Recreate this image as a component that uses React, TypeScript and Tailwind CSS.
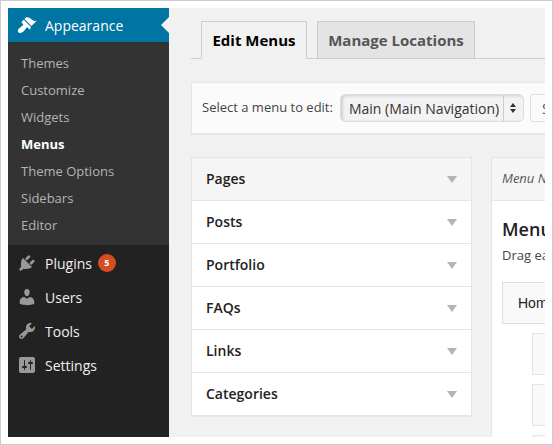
const font = { fontFamily: '"Open Sans", sans-serif' };

const icons = {
  appearance:
    "M14.48 11.06L7.41 3.99l1.5-1.5c.5-.56 2.3-.47 3.51.32 1.21.8 1.43 1.28 2.91 2.1 1.18.64 2.45 1.26 4.45.85zm-.71.71L6.7 4.7 4.93 6.47c-.39.39-.39 1.02 0 1.41l1.06 1.06c.39.39.39 1.03 0 1.42-.6.6-1.43 1.11-2.21 1.69-.35.26-.7.53-1.01.84C1.43 13.23.4 14.94 1.2 17.1c.1.26.3.47.54.55 2.16.8 3.87-.23 5.21-1.57.31-.31.58-.66.84-1.01.58-.78 1.09-1.61 1.69-2.21.39-.39 1.03-.39 1.42 0l1.06 1.06c.39.39 1.02.39 1.41 0z",
  plugins:
    "M13.11 4.36L9.87 7.6 8 5.73l3.24-3.24c.35-.34 1.05-.2 1.56.32.52.51.66 1.21.31 1.55zm-8 1.77l.91-1.12 9.01 9.01-1.19.84c-.71.71-2.63 1.16-3.82 1.16H6.14L4.9 17.26c-.59.59-1.54.59-2.12 0-.59-.58-.59-1.53 0-2.12l1.24-1.24v-3.88c0-1.13.4-3.19 1.09-3.89zm7.26 3.97l3.24-3.24c.34-.35 1.04-.21 1.55.31.52.51.66 1.21.31 1.55l-3.24 3.25z",
  users:
    "M10 9.25c-2.27 0-2.73-3.44-2.73-3.44C7 4.02 7.82 2 9.97 2c2.16 0 2.98 2.02 2.71 3.81 0 0-.41 3.44-2.68 3.44zm0 2.57L12.72 10c2.39 0 4.52 2.33 4.52 4.53v2.49s-3.65 1.13-7.24 1.13c-3.65 0-7.24-1.13-7.24-1.13v-2.49c0-2.25 1.94-4.48 4.47-4.48z",
  tools:
    "M16.68 9.77c-1.34 1.34-3.3 1.67-4.95.99l-5.41 6.52c-.99.99-2.59.99-3.58 0s-.99-2.59 0-3.57l6.52-5.42c-.68-1.65-.35-3.61.99-4.95 1.28-1.28 3.12-1.62 4.72-1.06l-2.89 2.89 2.82 2.82 2.86-2.87c.53 1.58.18 3.39-1.08 4.65zM3.81 16.21c.4.39 1.04.39 1.43 0 .4-.4.4-1.04 0-1.43-.39-.4-1.03-.4-1.43 0-.39.39-.39 1.03 0 1.43z",
  settings:
    "M18 16V4c0-1.1-.9-2-2-2H4c-1.1 0-2 .9-2 2v12c0 1.1.9 2 2 2h12c1.1 0 2-.9 2-2zM8 11h1c.55 0 1 .45 1 1s-.45 1-1 1H8v1.5c0 .28-.22.5-.5.5s-.5-.22-.5-.5V13H6c-.55 0-1-.45-1-1s.45-1 1-1h1V5.5c0-.28.22-.5.5-.5s.5.22.5.5V11zm5-2h-1c-.55 0-1-.45-1-1s.45-1 1-1h1V5.5c0-.28.22-.5.5-.5s.5.22.5.5V7h1c.55 0 1 .45 1 1s-.45 1-1 1h-1v5.5c0 .28-.22.5-.5.5s-.5-.22-.5-.5V9z",
};

function Icon({ d, className }: { d: string; className: string }) {
  return (
    <svg viewBox="0 0 20 20" className={`h-5 w-5 fill-current ${className}`} aria-hidden>
      <path d={d} />
    </svg>
  );
}

function MenuRow({ icon, label, badge }: { icon: string; label: string; badge?: string }) {
  return (
    <div className="flex h-[34px] items-center pl-[9px]">
      <Icon d={icon} className="text-[#999]" />
      <span className="ml-[8px] text-[14px] text-[#eee]">{label}</span>
      {badge && (
        <span className="ml-[6px] flex h-[18px] w-[18px] items-center justify-center rounded-full bg-[#d54e21] text-[9px] font-bold text-white">
          {badge}
        </span>
      )}
    </div>
  );
}

const subItems = ["Themes", "Customize", "Widgets", "Menus", "Theme Options", "Sidebars", "Editor"];
const panels = ["Pages", "Posts", "Portfolio", "FAQs", "Links", "Categories"];

export default function App() {
  return (
    <div className="h-[445px] w-[553px] overflow-hidden border border-[#ccc] bg-white p-[7px]" style={font}>
      <div className="flex h-[429px] w-[537px] overflow-hidden">
        {/* Sidebar */}
        <div className="flex w-[161px] shrink-0 flex-col bg-[#222]">
          <div className="relative flex h-[34px] shrink-0 items-center bg-[#0074a2] pl-[9px]">
            <Icon d={icons.appearance} className="text-white" />
            <span className="ml-[8px] text-[14px] text-white">Appearance</span>
            <span className="absolute right-0 top-[9px] h-0 w-0 border-y-[8px] border-r-[8px] border-y-transparent border-r-[#f1f1f1]" />
          </div>
          <div className="flex h-[203px] shrink-0 flex-col bg-[#333] pt-[8px]">
            {subItems.map((item) => (
              <div
                key={item}
                className={`flex h-[27px] items-center pl-[13px] text-[13px] ${
                  item === "Menus" ? "font-bold text-white" : "text-[#b4b4b4]"
                }`}
              >
                {item}
              </div>
            ))}
          </div>
          <div className="pt-[1px]">
            <MenuRow icon={icons.plugins} label="Plugins" badge="5" />
            <MenuRow icon={icons.users} label="Users" />
            <MenuRow icon={icons.tools} label="Tools" />
            <MenuRow icon={icons.settings} label="Settings" />
          </div>
        </div>

        {/* Main */}
        <div className="min-w-0 flex-1 overflow-hidden bg-[#f1f1f1] pl-[22px] pt-[13px]">
          <div className="flex h-[38px] w-[400px] items-end border-b border-[#ccc] pl-[10px]">
            <div className="-mb-px flex h-[38px] w-[106px] items-center justify-center border border-[#ccc] border-b-[#f1f1f1] bg-[#f1f1f1] text-[15px] font-bold text-black">
              Edit Menus
            </div>
            <div className="ml-[10px] flex h-[37px] w-[158px] items-center justify-center border border-b-0 border-[#ccc] bg-[#e4e4e4] text-[15px] font-bold text-[#555]">
              Manage Locations
            </div>
          </div>

          <div className="mt-[23px] flex h-[52px] w-[400px] items-center border border-[#e5e5e5] bg-[#fbfbfb] pl-[10px] shadow-[0_1px_1px_rgba(0,0,0,0.04)]">
            <span className="shrink-0 whitespace-nowrap text-[13px] text-[#444]">Select a menu to edit:</span>
            <div className="ml-[7px] flex h-[28px] w-[184px] shrink-0 items-center rounded-[5px] border border-[#ddd] bg-[#f3f3f3] shadow-[inset_2px_1px_3px_rgba(0,0,0,0.15)]">
              <span className="flex-1 whitespace-nowrap pl-[8px] text-[14px] text-[#333]">Main (Main Navigation)</span>
              <span className="flex h-full w-[20px] flex-col items-center justify-center gap-[2px] border-l border-[#ccc]">
                <span className="h-0 w-0 border-x-[3.5px] border-b-[4px] border-x-transparent border-b-[#333]" />
                <span className="h-0 w-0 border-x-[3.5px] border-t-[4px] border-x-transparent border-t-[#333]" />
              </span>
            </div>
            <div className="ml-[6px] flex h-[28px] w-[60px] shrink-0 items-center rounded-[3px] border border-[#ddd] bg-[#fbfbfb] pl-[11px] text-[14px] text-[#555]">
              Select
            </div>
          </div>

          <div className="mt-[23px] flex items-start gap-[19px]">
            <div className="w-[281px] shrink-0 border border-[#e5e5e5] bg-white shadow-[0_1px_1px_rgba(0,0,0,0.04)]">
              {panels.map((name, i) => (
                <div
                  key={name}
                  className={`flex items-center justify-between px-[14px] pb-[2px] text-[14px] font-semibold text-[#222] ${
                    i > 0 ? "h-[43px] border-t border-[#e5e5e5]" : "h-[42px] bg-[#f5f5f5]"
                  }`}
                >
                  {name}
                  <span className="mt-[2px] h-0 w-0 border-x-[5px] border-t-[7px] border-x-transparent border-t-[#b4b4b4]" />
                </div>
              ))}
            </div>

            <div className="h-[300px] w-[300px] shrink-0 border border-[#e5e5e5] bg-white">
              <div className="flex h-[43px] items-center border-b border-[#e5e5e5] bg-[#f5f5f5] pl-[10px] text-[13px] italic text-[#555]">
                Menu Name
              </div>
              <div className="pl-[10px] pt-[16px]">
                <div className="text-[18px] font-semibold leading-[24px] text-[#222]">Menu Structure</div>
                <div className="mt-[5px] whitespace-nowrap text-[13px] leading-[18px] text-[#444]">
                  Drag each item into the order you prefer.
                </div>
                <div className="mt-[18px] flex h-[42px] w-[280px] items-center border border-[#dfdfdf] bg-[#f9f9f9] pl-[15px] pt-[1px] font-['Liberation_Sans'] text-[14px] text-[#222]">
                  Home
                </div>
                <div className="ml-[30px] mt-[9px] h-[42px] w-[250px] border border-[#e5e5e5] bg-[#f9f9f9]" />
                <div className="ml-[30px] mt-[9px] h-[42px] w-[250px] border border-[#e5e5e5] bg-[#f9f9f9]" />
                <div className="ml-[30px] mt-[9px] h-[42px] w-[250px] border border-[#e5e5e5] bg-[#f9f9f9]" />
              </div>
            </div>
          </div>
        </div>
      </div>
    </div>
  );
}
